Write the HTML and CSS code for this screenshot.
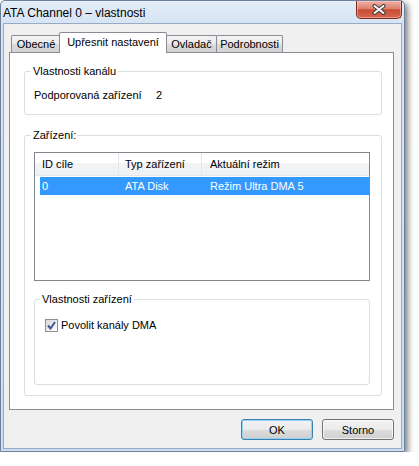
FILE: index.html
```html
<!DOCTYPE html>
<html lang="cs">

<head>
    <meta charset="UTF-8">
    <meta name="viewport" content="width=device-width, initial-scale=1.0">
    <title>ATA Channel 0 – vlastnosti</title>
    <link rel="stylesheet" href="styles.css">
</head>

<body>
    <div class="window">
        <div class="titlebar">
            <span class="title">ATA Channel 0 – vlastnosti</span>
            <button class="close-btn" title="Zavřít">
                <svg width="14" height="11" viewBox="0 0 14 11">
                    <path d="M2.5 2 L11.5 9 M11.5 2 L2.5 9" stroke="#3b3b3b" stroke-width="4" stroke-linecap="round" fill="none" />
                    <path d="M2.5 2 L11.5 9 M11.5 2 L2.5 9" stroke="#ffffff" stroke-width="2" stroke-linecap="round" fill="none" />
                </svg>
            </button>
        </div>

        <div class="client">
            <ul class="tabs">
                <li class="tab tab-general">Obecné</li>
                <li class="tab tab-active">Upřesnit nastavení</li>
                <li class="tab tab-driver">Ovladač</li>
                <li class="tab tab-details">Podrobnosti</li>
            </ul>

            <div class="panel">
                <fieldset class="group group-channel">
                    <legend>Vlastnosti kanálu</legend>
                    <div class="prop-row">
                        <span class="prop-name">Podporovaná zařízení</span>
                        <span class="prop-value">2</span>
                    </div>
                </fieldset>

                <fieldset class="group group-devices">
                    <legend>Zařízení:</legend>
                    <div class="list">
                        <div class="list-header">
                            <div class="col col-id">ID cíle</div>
                            <div class="col col-type">Typ zařízení</div>
                            <div class="col col-mode">Aktuální režim</div>
                        </div>
                        <div class="list-row selected">
                            <div class="col col-id">0</div>
                            <div class="col col-type">ATA Disk</div>
                            <div class="col col-mode">Režim Ultra DMA 5</div>
                        </div>
                    </div>

                    <fieldset class="group group-props">
                        <legend>Vlastnosti zařízení</legend>
                        <label class="check">
                            <span class="checkbox">
                                <svg width="9" height="9" viewBox="0 0 9 9">
                                    <path d="M1 4.5 L3.5 7.5 L8 1" stroke="#3c5a96" stroke-width="2" fill="none" />
                                </svg>
                            </span>
                            Povolit kanály DMA
                        </label>
                    </fieldset>
                </fieldset>
            </div>

            <div class="buttons">
                <button class="btn btn-default">OK</button>
                <button class="btn">Storno</button>
            </div>
        </div>
    </div>
</body>

</html>
```

FILE: styles.css
```css
/* Global Styles */
body {
    margin: 0;
    background-color: #fff;
    font-family: 'Liberation Sans', Arial, sans-serif;
    font-size: 11px;
    color: #000;
}

/* Window frame */
.window {
    width: 405px;
    height: 452px;
    box-sizing: border-box;
    border: 1px solid #6d819c;
    border-radius: 5px 5px 0 0;
    padding: 0 2px 2px;
    background: linear-gradient(180deg, #e4edf8 0, #d5e3f3 24px, #cddef0 100%);
    box-shadow: 3px 3px 6px rgba(0, 0, 0, 0.5);
    display: flex;
    flex-direction: column;
}

.titlebar {
    height: 22px;
    display: flex;
    justify-content: space-between;
    align-items: flex-start;
}

.title {
    font-size: 12px;
    line-height: 22px;
    padding-top: 1px;
}

.close-btn {
    width: 46px;
    height: 18px;
    padding: 0;
    border: 1px solid #7a2a1d;
    border-top: none;
    border-radius: 0 0 5px 5px;
    background: linear-gradient(180deg, #eeb2a5 0%, #de806e 45%, #c94b34 52%, #d4674f 100%);
    box-shadow: inset 0 0 0 1px rgba(255, 210, 200, 0.5);
    display: flex;
    align-items: center;
    justify-content: center;
}

.client {
    flex: 1;
    border: 1px solid #97abc4;
    background-color: #f0f0f0;
    padding: 8px 7px 0 5px;
}

/* Tabs */
.tabs {
    list-style: none;
    margin: 0 0 0 2px;
    padding: 0;
    height: 20px;
    display: flex;
    align-items: flex-end;
}

.tab {
    box-sizing: border-box;
    height: 17px;
    border: 1px solid #898c95;
    border-bottom: none;
    margin-right: -1px;
    background: linear-gradient(180deg, #f3f3f3 0%, #ebebeb 50%, #dcdcdc 51%, #d3d3d3 100%);
    text-align: center;
    line-height: 16px;
    border-radius: 2px 2px 0 0;
}

.tab-general {
    width: 50px;
}

.tab-active {
    width: 108px;
    height: 21px;
    margin-left: -1px;
    margin-bottom: -1px;
    background: #fff;
    line-height: 18px;
    position: relative;
    z-index: 2;
}

.tab-driver {
    width: 51px;
}

.tab-details {
    width: 67px;
}

/* Panel */
.panel {
    position: relative;
    z-index: 1;
    height: 358px;
    box-sizing: border-box;
    border: 1px solid #898c95;
    background-color: #fff;
    padding: 11px 11px 0 14px;
}

.group {
    margin: 0;
    min-width: 0;
    border: 1px solid #d5dfe5;
    border-radius: 3px;
}

.group legend {
    line-height: 14px;
    padding: 0 2px;
    margin-left: -3px;
}

.group-channel {
    padding: 10px 9px 12px;
}

.prop-row {
    line-height: 14px;
}

.prop-name {
    display: inline-block;
    width: 119px;
}

.group-devices {
    margin-top: 13px;
    padding: 10px 11px 10px 9px;
}

/* List view */
.list {
    height: 129px;
    box-sizing: border-box;
    border: 1px solid #828790;
    background-color: #fff;
}

.list-header {
    height: 23px;
    box-sizing: border-box;
    display: grid;
    grid-template-columns: 84px 83px 1fr;
    background: linear-gradient(180deg, #fff 0%, #fff 45%, #f3f4f6 46%, #eef0f2 100%);
    border-bottom: 1px solid #e4e7eb;
    line-height: 22px;
}

.list-header .col {
    border-right: 1px solid #e2e5ea;
    padding-left: 7px;
}

.list-header .col-type {
    padding-left: 6px;
}

.list-header .col-mode {
    border-right: none;
    padding-left: 8px;
}

.list-row {
    margin: 1px 0 0 5px;
    height: 18px;
    line-height: 18px;
    display: grid;
    grid-template-columns: 79px 83px 1fr;
}

.list-row.selected {
    background-color: #3399ff;
    color: #fff;
}

.list-row .col-id {
    padding-left: 2px;
}

.list-row .col-type {
    padding-left: 6px;
}

.list-row .col-mode {
    padding-left: 8px;
}

.group-props {
    margin-top: 11px;
    padding: 12px 10px 52px;
}

.group-props legend {
    margin-left: -5px;
}

.check {
    display: flex;
    align-items: center;
    height: 14px;
}

.checkbox {
    width: 13px;
    height: 13px;
    box-sizing: border-box;
    border: 1px solid #8e8f8f;
    background: linear-gradient(135deg, #d6d6d6 0%, #f4f4f4 70%, #ffffff 100%);
    margin-right: 3px;
    display: flex;
    align-items: center;
    justify-content: center;
}

/* Buttons */
.buttons {
    display: flex;
    justify-content: flex-end;
    gap: 9px;
    margin-top: 9px;
}

.btn {
    width: 72px;
    height: 21px;
    padding: 0;
    border: 1px solid #707070;
    border-radius: 3px;
    background: linear-gradient(180deg, #f2f2f2 0%, #ebebeb 50%, #dddddd 51%, #cfcfcf 100%);
    box-shadow: inset 0 0 0 1px rgba(255, 255, 255, 0.7);
    font-family: 'Liberation Sans', Arial, sans-serif;
    font-size: 11px;
    color: #000;
}

.btn-default {
    border-color: #3c7fb1;
    box-shadow: inset 0 0 0 1px #8fd3f5;
}
```
